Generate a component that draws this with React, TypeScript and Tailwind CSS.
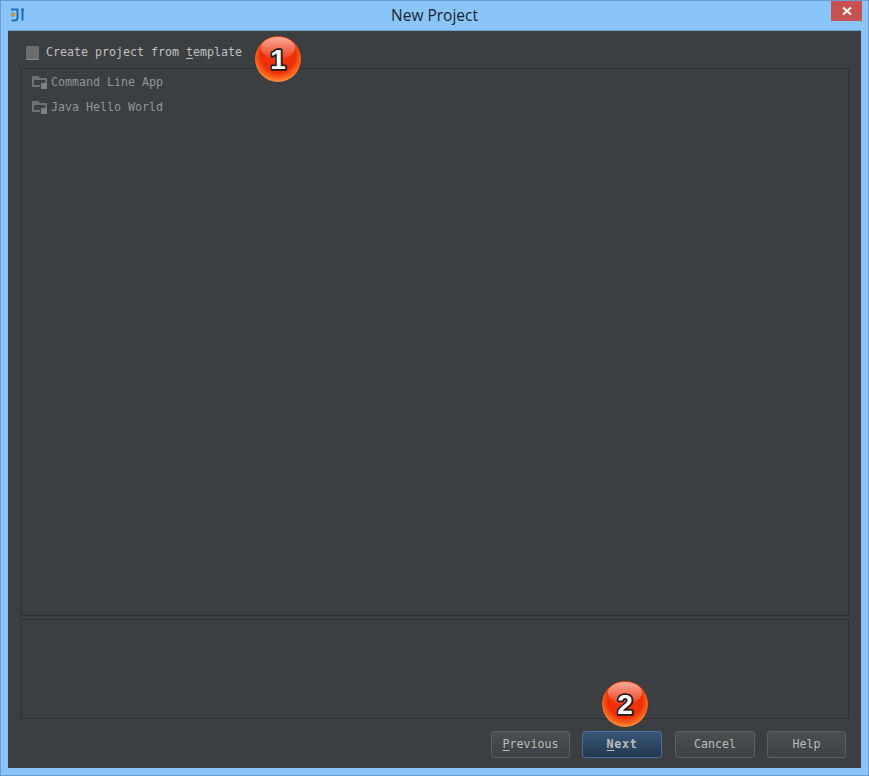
const mono = { fontFamily: '"DejaVu Sans Mono", monospace' };

const FolderIcon = () => (
  <svg width="16" height="14" viewBox="0 0 16 14" className="shrink-0">
    <path fillRule="evenodd" d="M0 0h6l2 2h7v5h-2v-3h-11v5h6v2h-8z" fill="#6f7173" />
    <rect x="9" y="7" width="6" height="6" fill="#7f8183" />
  </svg>
);

const Badge = ({ n, className }: { n: string; className: string }) => (
  <svg width="48" height="48" viewBox="0 0 48 48" className={`absolute ${className}`}>
    <defs>
      <radialGradient id={`ball${n}`} cx="50%" cy="42%" r="60%">
        <stop offset="0%" stopColor="#f03a10" />
        <stop offset="62%" stopColor="#ee2e06" />
        <stop offset="85%" stopColor="#fa6a20" />
        <stop offset="100%" stopColor="#ffa050" />
      </radialGradient>
      <linearGradient id={`shine${n}`} x1="0" y1="0" x2="0" y2="1">
        <stop offset="0%" stopColor="#ffffff" stopOpacity="0.6" />
        <stop offset="100%" stopColor="#ffffff" stopOpacity="0.05" />
      </linearGradient>
    </defs>
    <circle cx="24" cy="24" r="23.5" fill="#2a1a14" opacity="0.25" />
    <circle cx="24" cy="24" r="23" fill={`url(#ball${n})`} />
    <ellipse cx="24" cy="13" rx="17" ry="11" fill={`url(#shine${n})`} />
    <text
      x="24"
      y="34"
      textAnchor="middle"
      fontSize="28"
      fontWeight="700"
      fill="#ffffff"
      stroke="#1c1c1c"
      strokeWidth="3.5"
      paintOrder="stroke"
      strokeLinejoin="round"
      style={{ fontFamily: '"Liberation Sans", sans-serif' }}
    >
      {n}
    </text>
  </svg>
);

const DialogButton = ({ label, mn, primary, className }: { label: string; mn?: string; primary?: boolean; className: string }) => (
  <button
    className={`h-[27px] flex items-center justify-center rounded-[3px] border text-[11.63px] ${
      primary
        ? "font-bold tracking-[0.7px] text-[#bbbbbb] border-[#4a709c] bg-gradient-to-b from-[#385678] to-[#233850]"
        : "text-[#bbbbbb] border-[#5e6060] bg-gradient-to-b from-[#4b4e50] to-[#3f4244]"
    } ${className}`}
    style={mono}
  >
    {mn && <span className="underline underline-offset-2">{mn}</span>}
    {label}
  </button>
);

export default function App() {
  return (
    <div className="relative w-[869px] h-[776px] flex flex-col bg-[#8ac5fa] border border-[#6c9ccd] overflow-hidden">
      <header className="h-[29px] shrink-0 flex items-center relative">
        <svg width="16" height="16" viewBox="0 0 16 16" className="absolute left-[9px] top-[6px]" fill="none">
          <path d="M1 2.5h6.5v8q0 3-3 3h-3" stroke="#1d6fb0" strokeWidth="2" />
          <path d="M3 5q-2.5 2.5 0 5" stroke="#1d6fb0" strokeWidth="1" />
          <circle cx="3.5" cy="7.5" r="1.8" fill="#e88a1a" />
          <path d="M11 2.5h3M12.5 2.5v11" stroke="#1d6fb0" strokeWidth="2" />
        </svg>
        <h1 className="w-full text-center text-[15.5px] text-[#1a2430] pt-[1px]" style={{ fontFamily: '"Open Sans", sans-serif' }}>
          New Project
        </h1>
        <div className="absolute right-[6px] top-0 w-[31px] h-[20px] bg-[#c75050] flex items-center justify-center">
          <svg width="10" height="10" viewBox="0 0 10 10">
            <path d="M1 1.5l8 7M9 1.5l-8 7" stroke="#ffffff" strokeWidth="2" />
          </svg>
        </div>
      </header>

      <main className="flex-1 mx-[7px] mb-[7px] bg-[#3c3f41] border-t border-[#6d9fcc] flex flex-col px-[12px]" style={mono}>
        <div className="h-[37px] shrink-0 flex items-center pl-[6px] pt-[6px]">
          <span className="w-[13px] h-[14px] rounded-[1px] bg-[#6c6c6c] border-b border-[#8a8a8a]" />
          <span className="ml-[7px] text-[11.63px] text-[#c0c0c0] pt-[1px]">
            Create project from <span className="underline underline-offset-2">t</span>emplate
          </span>
        </div>

        <section className="h-[548px] shrink-0 border border-[#2f3133] pt-[1px] pl-[11px] flex flex-col text-[11.63px] text-[#929496]">
          <div className="h-[25px] flex items-center gap-[3px]">
            <FolderIcon />
            <span>Command Line App</span>
          </div>
          <div className="h-[25px] flex items-center gap-[3px]">
            <FolderIcon />
            <span>Java Hello World</span>
          </div>
        </section>

        <section className="h-[100px] shrink-0 mt-[3px] border border-[#2f3133]" />

        <footer className="flex-1 flex items-start pt-[12px]">
          <DialogButton label="revious" mn="P" className="w-[79px] ml-[471px]" />
          <DialogButton label="ext" mn="N" primary className="w-[80px] ml-[12px]" />
          <DialogButton label="Cancel" className="w-[80px] ml-[13px]" />
          <DialogButton label="Help" className="w-[79px] ml-[12px]" />
        </footer>
      </main>

      <Badge n="1" className="left-[253px] top-[34px]" />
      <Badge n="2" className="left-[600px] top-[679px]" />
    </div>
  );
}
